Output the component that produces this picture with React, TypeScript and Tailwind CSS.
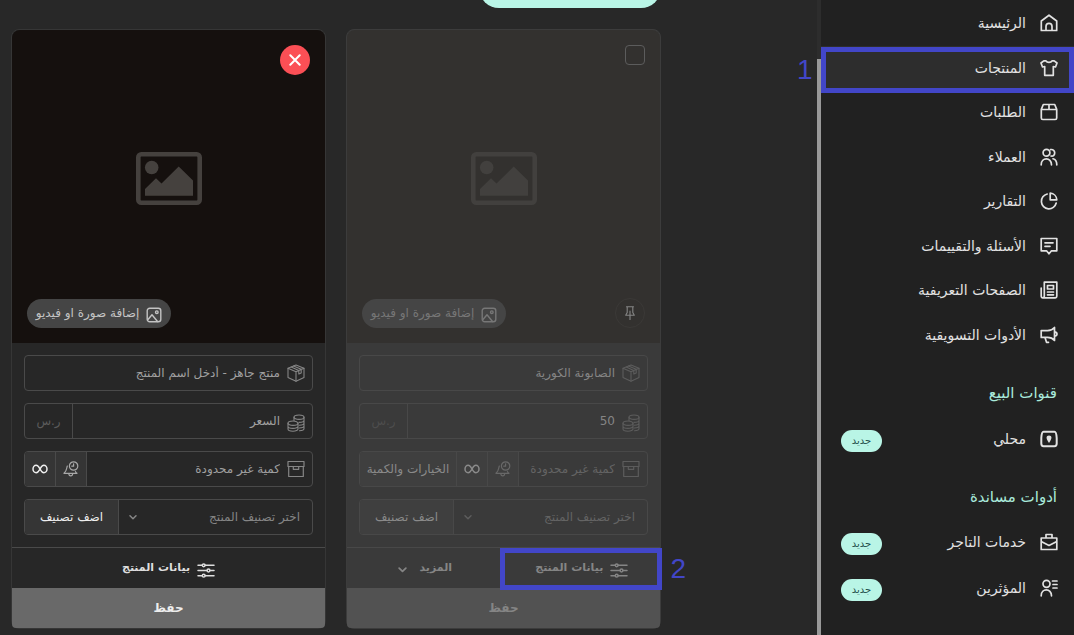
import type { ReactNode } from "react";

const stroke = {
  fill: "none",
  stroke: "currentColor",
  strokeLinecap: "round",
  strokeLinejoin: "round",
} as const;

type IconProps = { className?: string };

function NavIcon({ children }: { children: ReactNode }) {
  return (
    <svg className="size-[18px] shrink-0" viewBox="0 0 18 18" strokeWidth="1.7" aria-hidden="true" {...stroke}>
      {children}
    </svg>
  );
}

function ImageIcon({ className }: IconProps) {
  return (
    <svg className={className} viewBox="0 0 66 53" aria-hidden="true">
      <rect x="2.3" y="2.3" width="61.4" height="48.4" rx="3" fill="none" stroke="currentColor" strokeWidth="4.6" />
      <circle cx="15.7" cy="15.5" r="6.8" fill="currentColor" />
      <path d="M9 43.8V37L20 26.3L25.5 31.5L42.7 14.5L57 28.5V43.8Z" fill="currentColor" />
    </svg>
  );
}

function PhotoIcon({ className }: IconProps) {
  return (
    <svg className={className} viewBox="0 0 16 16" strokeWidth="1.4" aria-hidden="true" {...stroke}>
      <rect x="1.2" y="1.2" width="13.6" height="13.6" rx="2.5" />
      <circle cx="10.8" cy="5.2" r="1.3" />
      <path d="M2 12.5L6 7.8L11.5 14.5" />
    </svg>
  );
}

function BoxIcon() {
  return (
    <svg className="size-[18px] shrink-0" viewBox="0 0 18 18" strokeWidth="1.1" aria-hidden="true" {...stroke}>
      <path d="M9 1L17 4.2V13.5L9 17.3L1 13.5V4.2Z" />
      <path d="M1 4.2L9 7.8L17 4.2M9 7.8V17.3M6.5 2L14.2 5.3V9L11.8 10V6.5L4.2 3" />
    </svg>
  );
}

function CoinsIcon() {
  return (
    <svg className="mt-1 size-[18px] shrink-0" viewBox="0 0 18 18" strokeWidth="1.1" aria-hidden="true" {...stroke}>
      <ellipse cx="12" cy="3.2" rx="5" ry="2.2" />
      <path d="M7 3.2V6.5M17 3.2V14.5C17 15.8 15 16.7 12.5 16.7M17 6.2C17 7.3 15 8.4 12 8.4M17 9C17 10.1 15 11.2 12.3 11.2M17 11.8C17 12.9 15 14 12.3 14" />
      <ellipse cx="6" cy="9.2" rx="5" ry="2.2" />
      <path d="M1 9.2V15C1 16.2 3.2 17.2 6 17.2S11 16.2 11 15V9.2M1 12.2C1 13.4 3.2 14.4 6 14.4S11 13.4 11 12.2" />
    </svg>
  );
}

function ArchiveIcon() {
  return (
    <svg className="size-[18px] shrink-0" viewBox="0 0 18 18" strokeWidth="1.2" aria-hidden="true" {...stroke}>
      <path d="M1 1.5H17V6.5H1ZM1.7 6.5V16.5H16.3V6.5M6.3 6.5V9.3H11.7V6.5" />
    </svg>
  );
}

function BellClockIcon() {
  return (
    <svg className="size-4" viewBox="0 0 16 16" strokeWidth="1.2" aria-hidden="true" {...stroke}>
      <circle cx="10.6" cy="5" r="4.2" />
      <path d="M10.6 2.8V5.2H8.8M4.3 5C3.4 7 4.2 9.5 1 12.3H14C13 11.6 12.7 11.2 12.5 10.6M5.8 12.5C6 15.7 9.5 15.7 9.7 12.5" />
    </svg>
  );
}

function InfinityIcon() {
  return (
    <svg className="h-[10px] w-4" viewBox="0 0 16 10" strokeWidth="1.5" aria-hidden="true" {...stroke}>
      <path d="M8 5C6.5 2.2 5.6 1.2 4.2 1.2C2.3 1.2 1 3 1 5S2.3 8.8 4.2 8.8C5.6 8.8 6.5 7.8 8 5S10.4 1.2 11.8 1.2C13.7 1.2 15 3 15 5S13.7 8.8 11.8 8.8C10.4 8.8 9.5 7.8 8 5Z" />
    </svg>
  );
}

function SlidersIcon() {
  return (
    <svg className="mt-1 h-[15px] w-[18px] shrink-0" viewBox="0 0 18 15" strokeWidth="1.5" aria-hidden="true" {...stroke}>
      <path d="M1 2.3H5.2M8.2 2.3H17M1 7.5H10M13 7.5H17M1 12.7H5.2M8.2 12.7H17" />
      <circle cx="6.7" cy="2.3" r="1.4" />
      <circle cx="11.5" cy="7.5" r="1.4" />
      <circle cx="6.7" cy="12.7" r="1.4" />
    </svg>
  );
}

function ChevronIcon({ className }: IconProps) {
  return (
    <svg className={className} viewBox="0 0 8 5" strokeWidth="1.5" aria-hidden="true" {...stroke}>
      <path d="M1 0.8L4 3.8L7 0.8" />
    </svg>
  );
}

function PinIcon() {
  return (
    <svg className="size-[14px]" viewBox="0 0 14 14" strokeWidth="1.1" aria-hidden="true" {...stroke}>
      <path d="M3.5 0.7H10.5M4.2 0.7V6.5L2.7 9.3H11.3L9.8 6.5V0.7M7 5V13.7" />
    </svg>
  );
}

const navItems = [
  {
    label: "الرئيسية",
    icon: <path d="M1.3 16.5V7L9 1.2L16.7 7V16.5ZM6 16.5V12.5C6 8.3 12 8.3 12 12.5V16.5" />,
  },
  {
    label: "المنتجات",
    active: true,
    icon: <path d="M6 1.8C7 3.8 11 3.8 12 1.8H14.2L17 4L15.5 8L13.3 7.5V16.3H4.7V7.5L2.5 8L1 4L3.8 1.8Z" />,
  },
  {
    label: "الطلبات",
    icon: <path d="M1.3 6.3L3.3 1.5H14.7L16.7 6.3V15C16.7 16 16.2 16.5 15.2 16.5H2.8C1.8 16.5 1.3 16 1.3 15ZM1.3 6.5H16.7M9 1.5V6.5" />,
  },
  {
    label: "العملاء",
    icon: (
      <>
        <circle cx="6.5" cy="4.8" r="3.4" />
        <path d="M1.2 16.8C1.2 9 11.5 9 11.5 16.8M10.5 1.6C16 0.6 16 9 11 8M13 10.8C15.8 11.5 16.8 13.8 16.8 16.8" />
      </>
    ),
  },
  {
    label: "التقارير",
    icon: <path d="M7.2 2A7.5 7.5 0 1 0 16.2 11M10.2 1.2V7.8H16.8C16.6 4.2 13.9 1.4 10.2 1.2Z" />,
  },
  {
    label: "الأسئلة والتقييمات",
    icon: <path d="M1.2 1.5H16.8V13.8H11.5L9 16.8L6.5 13.8H1.2ZM5 5.8H13M5 9.3H10" />,
  },
  {
    label: "الصفحات التعريفية",
    icon: <path d="M4.3 1.2H16.8V15.3C16.8 16.3 16.3 16.8 15.3 16.8H2.8C1.8 16.8 1.2 16.2 1.2 15V7M4.3 1.2V15C4.3 16.2 3.7 16.8 2.8 16.8M7.5 4.5H13.5V8H7.5ZM7.5 11H13.5M7.5 13.8H13.5" />,
  },
  {
    label: "الأدوات التسويقية",
    icon: <path d="M14.5 1.5V14.5C12.5 12 10 11.4 7.5 11.4H1.2V4.6H7.5C10 4.6 12.5 4 14.5 1.5ZM14.5 5.8C17.8 6.2 17.8 9.8 14.5 10.2M5 11.5L6.5 16.3H8.5" />,
  },
];

function NavLink({ label, icon, active, badge }: { label: string; icon: ReactNode; active?: boolean; badge?: boolean }) {
  return (
    <a
      href="#"
      className={
        active
          ? "relative flex items-center gap-[14px] bg-[#2d2d2d] px-4 text-sm text-[#e2e2e2]"
          : "relative flex items-center gap-[14px] px-4 text-sm text-[#e2e2e2]"
      }
    >
      <NavIcon>{icon}</NavIcon>
      <span>{label}</span>
      {badge && (
        <span className="ml-1 mr-auto mt-1 flex h-[22px] w-[41px] items-center justify-center rounded-full bg-[#b9f5e6] text-[10px] text-[#1f4f4a]">
          جديد
        </span>
      )}
      {active && (
        <>
          <span className="absolute inset-x-0 -bottom-[3px] top-px border-[5px] border-[#4246c8]" />
          <span className="absolute -left-6 top-1 font-['Liberation_Sans',sans-serif] text-[28px] text-[#4246c8]">1</span>
        </>
      )}
    </a>
  );
}

function Sidebar() {
  return (
    <nav className="z-10 w-[253px] shrink-0 bg-[#212121] pt-px">
      <div className="grid h-[356px] grid-rows-8">
        {navItems.map((item) => (
          <NavLink key={item.label} {...item} />
        ))}
      </div>
      <h2 className="mt-[14px] flex h-11 items-center px-[17px] text-[15px] text-[#a9eadb]">قنوات البيع</h2>
      <div className="grid h-12">
        <NavLink
          label="محلي"
          badge
          icon={
            <>
              <path strokeWidth="2" d="M3.5 1.8H14.5C16 1.8 16.5 5 16.7 8V13.5C16.7 15.5 15.8 16.2 14.5 16.2H3.5C2.2 16.2 1.3 15.5 1.3 13.5V8C1.5 5 2 1.8 3.5 1.8Z" />
              <path fill="currentColor" stroke="none" d="M9 5.5C12 5.5 12.5 8.3 9 13C5.5 8.3 6 5.5 9 5.5Z" />
            </>
          }
        />
      </div>
      <h2 className="mt-3 flex h-11 items-center px-[17px] text-[15px] text-[#a9eadb]">أدوات مساندة</h2>
      <div className="grid h-[92px] grid-rows-2">
        <NavLink
          label="خدمات التاجر"
          badge
          icon={<path d="M1.2 5H16.8V16.5H1.2ZM6 5V1.5H12V5M1.2 8.5L9 12.5L16.8 8.5" />}
        />
        <NavLink
          label="المؤثرين"
          badge
          icon={
            <>
              <circle cx="6.5" cy="4.8" r="3.5" />
              <path d="M1.2 16.8C1.2 9 11.5 9 11.5 16.8M12.5 2H17M13 5.5H17M13 9H17" />
            </>
          }
        />
      </div>
    </nav>
  );
}

type Product = {
  id: string;
  name: string;
  namePlaceholder?: string;
  price: string;
  saved: boolean;
};

const products: Product[] = [
  { id: "soap", name: "الصابونة الكورية", price: "50", saved: true },
  { id: "new", name: "", namePlaceholder: "منتج جاهز - أدخل اسم المنتج", price: "", saved: false },
];

const dimmed = {
  card: "border-[#3c3c3c] bg-[#3a3a3a]",
  image: "bg-[#33312f]",
  placeholder: "text-[#42403e]",
  upload: "bg-[#454545] text-[#777777]",
  field: "border-[#484848] text-[#5c5c5c]",
  line: "border-[#484848]",
  input: "text-[#858585] placeholder:text-[#646464]",
  select: "text-[#646464]",
  currency: "text-[#4d4d4d]",
  cell: "border-[#484848] bg-[#3f3f3f] text-[#8a8a8a]",
  bell: "border-[#484848] bg-[#3f3f3f] text-[#686868]",
  footer: "text-[#858585]",
  save: "bg-[#525252] text-[#858585]",
};

const normal = {
  card: "border-[#363636] bg-[#272727]",
  image: "bg-[#15100e]",
  placeholder: "text-[#45413e]",
  upload: "bg-[#454545] text-[#c4c4c4]",
  field: "border-[#4a4a4a] text-[#858585]",
  line: "border-[#4a4a4a]",
  input: "text-[#a8a8a8] placeholder:text-[#a0a0a0]",
  select: "text-[#858585]",
  currency: "text-[#5c5c5c]",
  cell: "border-[#4a4a4a] bg-[#353535] text-[#eeeeee]",
  bell: "border-[#4a4a4a] bg-[#353535] text-[#a8a8a8]",
  footer: "text-[#dedede]",
  save: "bg-[#696969] text-[#ededed]",
};

function ProductCard({ product }: { product: Product }) {
  const { id, name, namePlaceholder, price, saved } = product;
  const tone = saved ? dimmed : normal;
  const field = `flex h-9 overflow-hidden rounded border ${tone.field}`;
  const label = "flex min-w-0 flex-1 items-center gap-[7px] pr-[7px]";
  const input = `min-w-0 flex-1 bg-transparent text-xs outline-none ${tone.input}`;

  return (
    <article className={`w-[315px] rounded-lg border ${tone.card}`}>
      <div className={`flex h-[313px] flex-col rounded-t-lg p-[15px] ${tone.image}`}>
        <div className="flex h-[30px] items-start">
          {saved ? (
            <input
              type="checkbox"
              aria-label="تحديد المنتج"
              className="size-5 appearance-none rounded border border-[#5c5c5c]"
            />
          ) : (
            <button aria-label="حذف" className="flex size-[30px] items-center justify-center rounded-full bg-[#fb4f55] text-white">
              <svg className="size-3" viewBox="0 0 12 12" strokeWidth="2" {...stroke}>
                <path d="M1.3 1.3L10.7 10.7M10.7 1.3L1.3 10.7" />
              </svg>
            </button>
          )}
        </div>
        <div className="flex flex-1 items-center justify-center pb-4">
          <ImageIcon className={`h-[53px] w-[66px] ${tone.placeholder}`} />
        </div>
        <div className="flex h-[30px] items-center">
          {saved && (
            <button aria-label="تثبيت" className="flex size-[30px] items-center justify-center rounded-full border border-[#3b3937] text-[#858585]">
              <PinIcon />
            </button>
          )}
          <button className={`mr-auto flex h-[29px] w-36 items-center justify-center gap-[7px] rounded-full text-xs ${tone.upload}`}>
            <PhotoIcon className="mt-1 size-4" />
            إضافة صورة او فيديو
          </button>
        </div>
      </div>

      <div className="flex flex-col gap-3 p-3">
        <div className={field}>
          <label className={label}>
            <BoxIcon />
            <input aria-label="اسم المنتج" className={input} defaultValue={name} placeholder={namePlaceholder} />
          </label>
        </div>

        <div className={field}>
          <label className={label}>
            <CoinsIcon />
            <input aria-label="السعر" className={input} defaultValue={price} placeholder="السعر" />
          </label>
          <span className={`flex w-12 items-center justify-center border-r text-xs ${tone.line} ${tone.currency}`}>ر.س</span>
        </div>

        <div className={field}>
          <label className={label}>
            <ArchiveIcon />
            <input aria-label="الكمية" className={input} placeholder="كمية غير محدودة" />
          </label>
          <button aria-label="تنبيه الكمية" className={`flex w-[31px] items-center justify-center border-r ${tone.bell}`}>
            <BellClockIcon />
          </button>
          <button aria-label="كمية غير محدودة" className={`flex w-[31px] items-center justify-center border-r ${tone.cell}`}>
            <InfinityIcon />
          </button>
          {saved && (
            <button className={`w-[97px] whitespace-nowrap border-r text-xs ${tone.cell}`}>الخيارات والكمية</button>
          )}
        </div>

        <div className={field}>
          <div className="relative flex min-w-0 flex-1">
            <select
              id={`category-${id}`}
              aria-label="تصنيف المنتج"
              className={`w-full appearance-none bg-transparent pr-3 text-xs outline-none ${tone.select}`}
            >
              <option>اختر تصنيف المنتج</option>
            </select>
            <ChevronIcon className="pointer-events-none absolute left-[10px] top-[15px] h-[5px] w-2" />
          </div>
          <button className={`w-[94px] border-r text-xs ${tone.cell}`}>اضف تصنيف</button>
        </div>
      </div>

      <div className={`flex h-[41px] border-t text-[11px] ${tone.line} ${tone.footer}`}>
        <button className="relative flex flex-1 items-center justify-center gap-[7px] font-bold">
          <SlidersIcon />
          بيانات المنتج
          {saved && (
            <>
              <span className="absolute -bottom-[2px] -left-1 -right-[2px] top-0 border-[5px] border-[#4246c8]" />
              <span className="absolute -right-[26px] top-0 font-['Liberation_Sans',sans-serif] text-[28px] font-normal text-[#4246c8]">2</span>
            </>
          )}
        </button>
        {saved && (
          <button className="flex flex-1 items-center justify-center gap-3 font-bold">
            المزيد
            <ChevronIcon className="mt-1 h-[6px] w-[9px]" />
          </button>
        )}
      </div>
      <button className={`block h-10 w-full rounded-b text-xs font-bold ${tone.save}`}>حفظ</button>
    </article>
  );
}

export default function App() {
  return (
    <div dir="rtl" className="flex min-h-screen overflow-x-hidden bg-[#282828] font-['DejaVu_Sans',sans-serif]">
      <Sidebar />
      <div className="w-1 shrink-0 bg-[#2d2d2d] pt-[59px]">
        <div className="h-full bg-[#999999]" />
      </div>
      <main className="flex flex-1 justify-end pl-[11px]">
        <div className="flex shrink-0 flex-col">
          <div className="flex h-2 items-end overflow-hidden">
            <button aria-label="إضافة منتج جديد" className="h-10 w-[182px] shrink-0 rounded-full bg-[#b9f5e6]" />
          </div>
          <div className="mt-[21px] flex gap-5">
            {products.map((product) => (
              <ProductCard key={product.id} product={product} />
            ))}
          </div>
        </div>
      </main>
    </div>
  );
}
